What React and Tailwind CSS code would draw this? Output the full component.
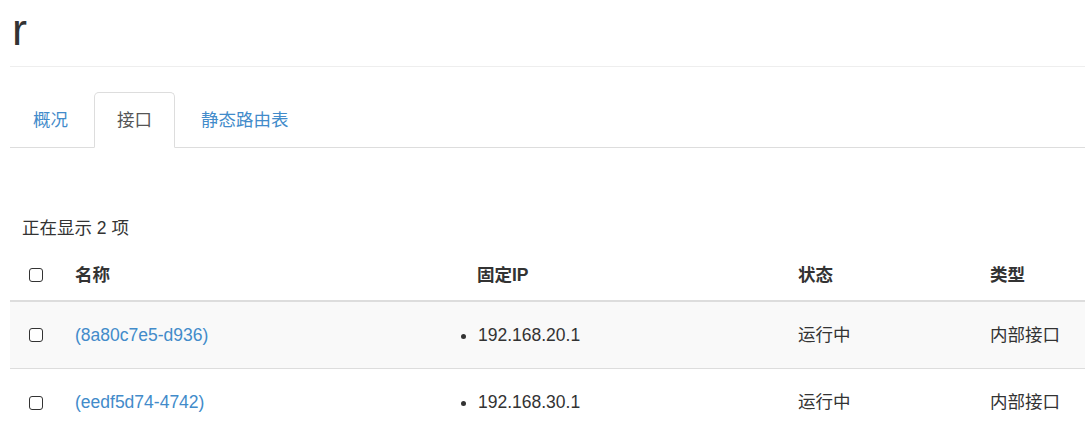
const tabs = [
  { label: '概况', active: false },
  { label: '接口', active: true },
  { label: '静态路由表', active: false },
];

const ports = [
  { name: '(8a80c7e5-d936)', ip: '192.168.20.1', status: '运行中', type: '内部接口' },
  { name: '(eedf5d74-4742)', ip: '192.168.30.1', status: '运行中', type: '内部接口' },
];

const cols = 'grid grid-cols-[65px_402px_321px_192px_1fr] items-center';

function Checkbox() {
  return <span className="ml-[19px] block w-[14px] h-[14px] border border-[#333] rounded-[3px] bg-white" />;
}

export default function App() {
  return (
    <div
      className="pl-[10px] bg-white text-[#333] text-[17.5px] leading-[25px]"
      style={{ fontFamily: '"Liberation Sans", "Noto Sans CJK SC", sans-serif' }}
    >
      {/* Page header */}
      <div className="pt-[5px] h-[67px] border-b border-[#eee]">
        <h1 className="h-[50px] text-[45px] leading-[50px] font-medium text-[#333] pl-[2px]">r</h1>
      </div>

      {/* Tabs */}
      <ul className="mt-[25px] h-[56px] flex border-b border-[#ddd]">
        {tabs.map(tab => (
          <li key={tab.label} className="mr-[3px]">
            <a
              href="#"
              className={`flex items-center h-[56px] px-[22px] rounded-t-[5px] border ${
                tab.active
                  ? 'bg-white border-[#ddd] border-b-white text-[#555]'
                  : 'border-transparent text-[#428bca]'
              }`}
            >
              {tab.label}
            </a>
          </li>
        ))}
      </ul>

      {/* Table */}
      <div className="mt-[68px] pl-[12px] h-[25px] mb-[9px] flex items-center">正在显示 2 项</div>

      <div className={`${cols} h-[52px] border-b-2 border-[#ddd] font-bold`}>
        <Checkbox />
        <span>名称</span>
        <span>固定IP</span>
        <span>状态</span>
        <span>类型</span>
      </div>

      {ports.map((port, i) => (
        <div
          key={port.name}
          className={`${cols} h-[67px] ${i % 2 === 0 ? 'bg-[#f9f9f9] border-b border-[#ddd]' : ''}`}
        >
          <Checkbox />
          <a href="#" className="text-[#428bca]">{port.name}</a>
          <ul className="list-disc pl-0 ml-[1px]">
            <li>{port.ip}</li>
          </ul>
          <span>{port.status}</span>
          <span>{port.type}</span>
        </div>
      ))}
    </div>
  );
}
